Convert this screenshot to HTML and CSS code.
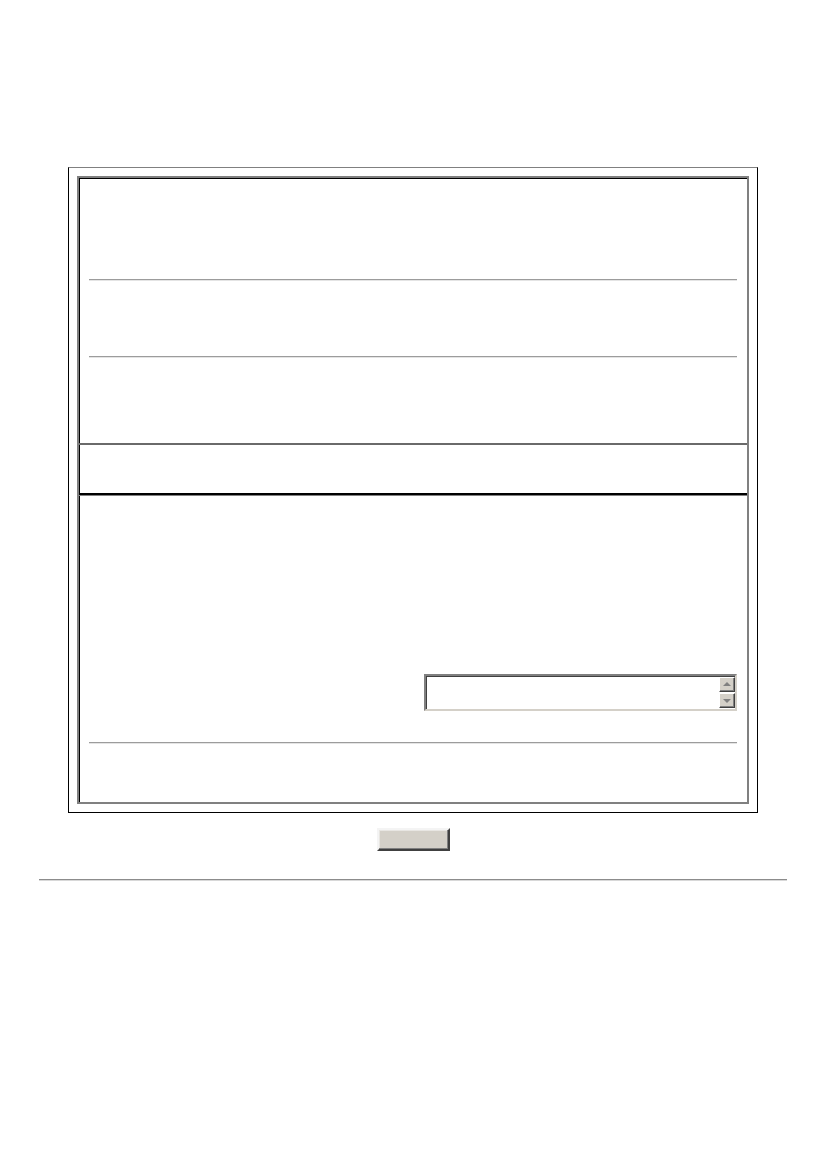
FILE: index.html
```html
<!DOCTYPE html>
<html lang="en">
<head>
    <meta charset="UTF-8">
    <title>Form</title>
    <link rel="stylesheet" href="styles.css">
</head>
<body>

<div class="page">
    <!-- Quadro principal -->
    <div class="frame">
        <div class="panel">
            <div class="cell cell-top">
                <hr class="rule">
                <hr class="rule rule-second">
            </div>
            <div class="cell cell-mid"></div>
            <div class="cell cell-bottom">
                <div class="field-row">
                    <div class="listbox">
                        <div class="listbox-text"></div>
                        <div class="scroll">
                            <span class="scroll-btn up"></span>
                            <span class="scroll-btn down"></span>
                        </div>
                    </div>
                </div>
                <hr class="rule rule-last">
            </div>
        </div>
    </div>

    <div class="actions">
        <button type="button" class="btn"></button>
    </div>

    <hr class="page-rule">
</div>

</body>
</html>
```

FILE: styles.css
```css
body {
    font-family: "Liberation Sans", Arial, sans-serif;
    background-color: #fff;
    margin: 0;
    padding: 0;
}

.page {
    padding-top: 167px;
}

.frame {
    width: 690px;
    margin: 0 auto;
    padding: 8px;
    box-sizing: border-box;
    border: 1px solid #000;
    border-top-color: #808080;
}

.panel {
    border: 2px solid #808080;
    border-top-color: #808080;
    border-left-color: #808080;
    box-shadow: inset 1px 1px 0 #000;
}

.cell {
    padding: 0 10px;
}

.cell-top {
    padding-top: 101px;
    padding-bottom: 85px;
    border-bottom: 2px solid #6a6a6a;
}

.cell-mid {
    height: 48px;
    border-bottom: 2px solid #000;
}

.cell-bottom {
    border-top: 1px solid #808080;
    padding-top: 178px;
    padding-bottom: 58px;
}

.rule {
    margin: 0;
    height: 0;
    border: none;
    border-top: 1px solid #9c9c9c;
    border-bottom: 1px solid #e4e4e4;
}

.rule-second {
    margin-top: 75px;
}

.rule-last {
    margin-top: 31px;
}

.field-row {
    display: flex;
    justify-content: flex-end;
}

.listbox {
    width: 313px;
    height: 37px;
    box-sizing: border-box;
    display: flex;
    background-color: #fff;
    border: 2px solid #d4d0c8;
    border-top-color: #808080;
    border-left-color: #808080;
    box-shadow: inset 1px 1px 0 #404040;
}

.listbox-text {
    flex: 1;
}

.scroll {
    width: 16px;
    display: flex;
    flex-direction: column;
    gap: 1px;
    padding: 1px 0;
}

.scroll-btn {
    display: block;
    flex: 1;
    position: relative;
    background-color: #d4d0c8;
    border: 1px solid #404040;
    border-top-color: #fff;
    border-left-color: #fff;
    box-shadow: inset -1px -1px 0 #808080;
}

/* setas do scroll */
.scroll-btn::after {
    content: "";
    position: absolute;
    left: 3px;
    border-left: 4px solid transparent;
    border-right: 4px solid transparent;
}

.scroll-btn.up::after {
    top: 4px;
    border-bottom: 4px solid #808080;
}

.scroll-btn.down::after {
    top: 5px;
    border-top: 4px solid #808080;
}

.actions {
    display: flex;
    justify-content: center;
    margin-top: 15px;
}

.btn {
    width: 73px;
    height: 23px;
    padding: 0;
    background-color: #d4d0c8;
    border: 2px solid #404040;
    border-top-color: #f4f4f4;
    border-left-color: #f4f4f4;
    box-shadow: inset -1px -1px 0 #808080, inset 1px 1px 0 #e8e6e2;
}

.page-rule {
    width: 748px;
    margin: 28px auto 0;
    height: 0;
    border: none;
    border-top: 1px solid #8c8c8c;
    border-bottom: 1px solid #d8d8d8;
}
```
